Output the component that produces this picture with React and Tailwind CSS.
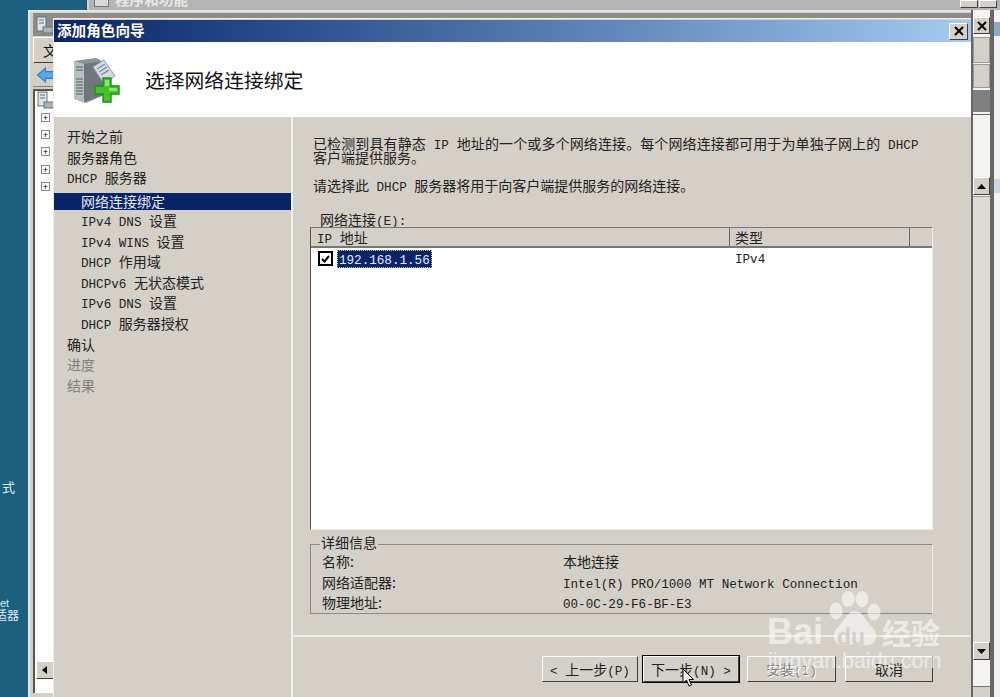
const cjk = '"Noto Sans CJK SC", sans-serif';

// SimSun-like mix: CJK runs stay at full size, latin runs go through a narrower mono
const Mix = ({ text }) => {
	const parts = text.split(/([\x20-\x7e]+)/).filter(Boolean);
	return (
		<span>
			{parts.map((p, i) =>
				/^[\x20-\x7e]+$/.test(p) ? (
					<span key={i} className="font-['Liberation_Mono',monospace] text-[12.6px] leading-[0px] whitespace-pre">
						{p}
					</span>
				) : (
					<span key={i}>{p}</span>
				)
			)}
		</span>
	);
};

const raised = 'border border-t-white border-l-white border-r-[#404040] border-b-[#404040] bg-[#d4d0c8]';

const NavItem = ({ text, sub, active, disabled }) => {
	if (active) {
		return (
			<div className="h-[17px] mt-[5px] flex items-center pl-[27px] bg-[#0a246a] text-[#e8e8f0]">
				<Mix text={text} />
			</div>
		);
	}
	return (
		<div
			className={`h-[20.6px] flex items-center ${sub ? 'pl-[27px]' : 'pl-[13px]'} ${
				disabled ? 'text-[#808080]' : 'text-[#222]'
			}`}
		>
			<Mix text={text} />
		</div>
	);
};

const navItems = [
	{ text: '开始之前' },
	{ text: '服务器角色' },
	{ text: 'DHCP 服务器' },
	{ text: '网络连接绑定', sub: true, active: true },
	{ text: 'IPv4 DNS 设置', sub: true },
	{ text: 'IPv4 WINS 设置', sub: true },
	{ text: 'DHCP 作用域', sub: true },
	{ text: 'DHCPv6 无状态模式', sub: true },
	{ text: 'IPv6 DNS 设置', sub: true },
	{ text: 'DHCP 服务器授权', sub: true },
	{ text: '确认' },
	{ text: '进度', disabled: true },
	{ text: '结果', disabled: true },
];

const ServerIcon = () => (
	<svg width="50" height="50" viewBox="0 0 50 50" className="shrink-0">
		<path d="M2 6 L24 3 L32 7 L32 40 L14 48 L2 44 Z" fill="#8d9396" />
		<path d="M2 6 L12 9 L12 47 L2 44 Z" fill="#b9bec0" />
		<path d="M12 9 L32 6 L32 40 L12 47 Z" fill="#71767a" />
		<path d="M4 12 H11 M4 15 H11 M4 24 H11 M4 27 H11 M4 30 H11 M4 33 H11 M4 36 H11 M4 39 H11" stroke="#5a5f62" strokeWidth="1.2" />
		<path d="M21 12 L32 5 L43 21 L32 29 Z" fill="#d3dce6" stroke="#8fa0b2" />
		<path d="M25 14 L33 9 M27 17 L35 12 M29 20 L37 15" stroke="#77889a" strokeWidth="1.2" />
		<path d="M31 23 H39 V31 H47 V39 H39 V47 H31 V39 H23 V31 H31 Z" fill="#43c42b" stroke="#1f8f14" strokeWidth="1.4" />
		<path d="M33 25 H37 V33 H45 V36 H37 V31 H33 Z" fill="#8ae66f" />
	</svg>
);

const SmallServer = () => (
	<svg width="18" height="18" viewBox="0 0 18 18">
		<rect x="1" y="1" width="9" height="14" fill="#dfe3e6" stroke="#6d7275" />
		<path d="M3 4 H8 M3 7 H8" stroke="#6d7275" />
		<rect x="7" y="11" width="10" height="6" fill="#aab2b8" stroke="#6d7275" />
	</svg>
);

const Cross = () => (
	<svg width="10" height="10" viewBox="0 0 10 10">
		<path d="M1 1 L9 9 M9 1 L1 9" stroke="#000" strokeWidth="2" />
	</svg>
);

const Btn = ({ children, w, primary, disabled }) => (
	<div
		className={`h-[26px] ${w} flex items-center justify-center pb-[1px] ${raised} ${
			primary ? 'outline outline-black' : ''
		} ${disabled ? 'text-[#808080] [text-shadow:1px_1px_0_#fff]' : 'text-[#222]'}`}
	>
		{children}
	</div>
);

const Watermark = () => (
	<div className="absolute left-[765px] top-[588px] w-[200px] h-[100px] pointer-events-none">
		<svg width="54" height="58" viewBox="0 0 54 58" className="absolute left-[63px] top-[3px]">
			<g fill="#ffffff" fillOpacity="0.55">
				<ellipse cx="8" cy="20" rx="6.5" ry="8.5" />
				<ellipse cx="20" cy="8" rx="6.5" ry="8" />
				<ellipse cx="34" cy="8" rx="6.5" ry="8" />
				<ellipse cx="46" cy="21" rx="6.5" ry="8.5" />
				<path d="M27 20 C19 20 17 30 9 37 C2 44 7 56 18 54 C24 53 30 53 36 54 C47 56 52 44 45 37 C37 30 35 20 27 20 Z" />
			</g>
		</svg>
		<div className="absolute left-[2px] top-[24px] font-['Liberation_Sans',sans-serif] font-bold text-[36px] leading-[40px] text-white/55">
			Bai
		</div>
		<div className="absolute left-[72px] top-[36px] font-['Liberation_Sans',sans-serif] font-bold text-[23px] leading-[26px] text-[#d4d0c8]">
			du
		</div>
		<div className="absolute left-[117px] top-[30px] font-bold text-[29px] leading-[28px] text-white/55">经验</div>
		<div className="absolute left-[3px] top-[60px] font-['Liberation_Sans',sans-serif] text-[21.5px] leading-[26px] text-white/55">
			jingyan.baidu.com
		</div>
	</div>
);

export default function App() {
	return (
		<div
			className="relative w-[1000px] h-[697px] overflow-hidden bg-[#1c5f7e] text-[14px] leading-[14px]"
			style={{ fontFamily: cjk }}
		>
			{/* desktop labels */}
			<div className="absolute left-[2px] top-[480px] text-[13px] text-[#dfeef5]">式</div>
			<div className="absolute left-0 top-[598px] text-[#dfeef5]">
				<div className="font-['Liberation_Sans',sans-serif] text-[11px] leading-[10px]">et</div>
				<div className="text-[12px] leading-[13px] ml-[-5px] whitespace-nowrap">适器</div>
			</div>

			{/* window behind, programs and features */}
			<div className="absolute left-[87px] right-0 top-0 h-[10px] bg-[#b4b4b4] border-l-2 border-[#d4d0c8] flex overflow-hidden">
				<div className="ml-[5px] w-[15px] h-[7px] bg-[#d8d8d8] border-x border-b border-[#777]" />
				<div className="pl-[6px] -mt-[8px] text-[#e6e6e6] text-[14.6px] font-bold">程序和功能</div>
				<div className="ml-auto flex gap-[1px] mr-[3px]">
					<div className={`w-[18px] h-[8px] ${raised}`} />
					<div className={`w-[18px] h-[8px] ${raised}`} />
				</div>
			</div>

			{/* server manager window */}
			<div className="absolute left-[28px] top-[10px] w-[967px] bottom-0 bg-[#d4d0c8] border-l-2 border-t-2 border-[#e8e6e0] flex flex-col">
				<div className="h-[23px] bg-[#8c8c8c] mt-[1px] ml-[3px] pl-[3px] flex items-center">
					<SmallServer />
				</div>
				<div className={`mt-[1px] ml-[3px] h-[26px] ${raised} flex items-center pl-[9px] text-[#111]`}>文</div>
				<div className="ml-[3px] h-[24px] flex items-center pl-[3px] border-b border-[#808080]">
					<svg width="19" height="16" viewBox="0 0 16 14">
						<path d="M1 7 L8 1 V4 H15 V10 H8 V13 Z" fill="#5aa9e6" stroke="#2f7fc0" />
					</svg>
				</div>
				<div className="flex-1 flex ml-[3px] mt-[2px] mb-[4px] min-h-0">
					<div className="w-[22px] bg-white border-l-2 border-t-2 border-[#555] flex flex-col">
						<div className="ml-[2px]">
							<SmallServer />
						</div>
						<div className="flex flex-col gap-[8.2px] mt-[4px] pl-[6px]">
							{[0, 1, 2, 3, 4].map((i) => (
								<div
									key={i}
									className="w-[9px] h-[9px] border border-[#888] flex items-center justify-center text-[9px] leading-none text-black"
								>
									+
								</div>
							))}
						</div>
						<div className="mt-auto mb-[14px]">
							<div className={`w-[18px] h-[18px] ml-[1px] ${raised} flex items-center justify-center`}>
								<svg width="6" height="8" viewBox="0 0 6 8">
									<path d="M5 0 V8 L0 4 Z" fill="#000" />
								</svg>
							</div>
						</div>
					</div>
				</div>
			</div>

			{/* right side: outer scrollbar and neighbouring pane */}
			<div className="absolute left-[971px] top-[10px] w-[21px] bottom-0 bg-[#f4f3f0] border-x-2 border-[#666] flex flex-col">
				<div className={`w-[17px] h-[17px] mt-[7px] ${raised} flex items-center justify-center`}>
					<Cross />
				</div>
				<div className="w-[17px] h-[26px] mt-[3px] bg-[#d4d0c8] border border-[#999]" />
				<div className="w-[17px] h-[24px] mt-[1px] bg-[#d4d0c8] border border-[#999]" />
				<div className="w-[17px] h-[22px] mt-[2px] bg-[#808080]" />
				<div className="h-[62px] mt-[2px] border-t border-[#666]" />
				<div className={`w-[17px] h-[18px] mt-[1px] ${raised} flex items-center justify-center`}>
					<svg width="9" height="5" viewBox="0 0 9 5">
						<path d="M0 5 H9 L4.5 0 Z" fill="#000" />
					</svg>
				</div>
				<div className="flex-1 mt-[1px] bg-[#dedbd5] border-t border-[#999]" />
				<div className={`w-[17px] h-[18px] ${raised} flex items-center justify-center`}>
					<svg width="9" height="5" viewBox="0 0 9 5">
						<path d="M0 0 H9 L4.5 5 Z" fill="#000" />
					</svg>
				</div>
				<div className="h-[26px]" />
				<div className="h-[11px] bg-[#d4d0c8] border-t border-[#777]" />
			</div>
			<div className="absolute left-[992px] top-[10px] w-[8px] bottom-0 bg-[#f2f2f2] border-l-2 border-[#666]">
				<div className="h-[14px] mt-[12px] bg-[#8ea8cc]" />
				<div className="h-[14px] mt-[143px] bg-[#cdd6e3]" />
			</div>

			{/* wizard dialog */}
			<div className="absolute left-[53px] top-[18px] w-[918px] h-[679px] bg-[#d4d0c8] border-l border-t border-[#f0eee8] flex flex-col text-[#222]">
				<div className="mt-[1px] h-[22px] shrink-0 bg-gradient-to-r from-[#0a246a] to-[#a6caf0] flex items-center pl-[3px] pr-[3px]">
					<div className="text-white font-bold text-[14.6px] -mt-[2px]">添加角色向导</div>
					<div className={`ml-auto w-[19px] h-[17px] ${raised} flex items-center justify-center`}>
						<Cross />
					</div>
				</div>
				<div className="h-[75px] shrink-0 bg-white flex items-center pl-[18px] gap-[23px]">
					<ServerIcon />
					<div className="text-[19.8px] leading-[24px] text-[#111]">选择网络连接绑定</div>
				</div>
				<div className="flex-1 flex min-h-0">
					<div className="w-[239px] shrink-0 pt-[9px] border-r-2 border-[#f0eee8]">
						{navItems.map((item) => (
							<NavItem key={item.text} {...item} />
						))}
					</div>
					<div className="flex-1 flex flex-col min-w-0">
						<div className="h-[520px] shrink-0 pl-[20px] pt-[19px] border-b-2 border-[#eeece6] flex flex-col">
							<p className="whitespace-nowrap tracking-[0.12px]">
								<Mix text="已检测到具有静态 IP 地址的一个或多个网络连接。每个网络连接都可用于为单独子网上的 DHCP" />
							</p>
							<p className="whitespace-nowrap">客户端提供服务。</p>
							<p className="mt-[14px] whitespace-nowrap">
								<Mix text="请选择此 DHCP 服务器将用于向客户端提供服务的网络连接。" />
							</p>
							<div className="mt-[20px] ml-[7px] h-[14px]">
								<Mix text="网络连接(E):" />
							</div>
							<div className="mt-[1px] -ml-[3px] w-[623px] h-[303px] bg-white border border-t-[#777] border-l-[#555] border-r-[#f0eee8] border-b-[#f0eee8] flex flex-col shrink-0">
								<div className="h-[20px] shrink-0 bg-[#d4d0c8] border-b-2 border-[#777] flex items-center">
									<div className="w-[419px] h-full pl-[6px] flex items-center border-r border-[#666]">
										<Mix text="IP 地址" />
									</div>
									<div className="w-[180px] h-full pl-[5px] flex items-center border-r border-[#666]">类型</div>
								</div>
								<div className="flex items-center h-[19px] mt-[1px] pl-[7px]">
									<div className="w-[15px] h-[15px] shrink-0 border-2 border-black flex items-center justify-center mr-[4px]">
										<svg width="9" height="8" viewBox="0 0 9 8">
											<path d="M1 4 L3.5 6.5 L8 1" stroke="#000" strokeWidth="2" fill="none" />
										</svg>
									</div>
									<div className="w-[95px] h-[18px] shrink-0 bg-[#0a246a] text-[#e8ecf6] border border-dotted border-[#c8c8a0] flex items-center pl-[1px] pb-[2px]">
										<Mix text="192.168.1.56" />
									</div>
									<div className="ml-[303px] pb-[3px]">
										<Mix text="IPv4" />
									</div>
								</div>
							</div>
							<div className="relative mt-[14px] -ml-[3px] w-[623px] h-[70px] border border-t-[#8a8a8a] border-l-[#8a8a8a] border-r-[#f0eee8] border-b-[#8a8a8a] shrink-0">
								<div className="absolute left-[9px] -top-[10px] bg-[#d4d0c8] px-[1px]">详细信息</div>
								<div className="grid grid-cols-[241px_1fr] auto-rows-[20.5px] pl-[11px] pt-[6px] items-center">
									<div>名称:</div>
									<div>本地连接</div>
									<div>网络适配器:</div>
									<div>
										<Mix text="Intel(R) PRO/1000 MT Network Connection" />
									</div>
									<div>物理地址:</div>
									<div>
										<Mix text="00-0C-29-F6-BF-E3" />
									</div>
								</div>
							</div>
						</div>
						<div className="flex-1 flex items-start gap-[5px] pl-[249px] pt-[19px]">
							<Btn w="w-[96px]">
								<Mix text="< 上一步(P)" />
							</Btn>
							<Btn w="w-[96px]" primary>
								<Mix text="下一步(N) >" />
							</Btn>
							<Btn w="w-[89px] ml-[3px]" disabled>
								<Mix text="安装(I)" />
							</Btn>
							<Btn w="w-[88px] ml-[4px]">取消</Btn>
						</div>
					</div>
				</div>
			</div>

			{/* mouse cursor */}
			<svg width="13" height="20" viewBox="0 0 13 20" className="absolute left-[682px] top-[668px]">
				<path d="M1 1 V15 L4.5 12 L7 18 L9.5 17 L7 11.5 H11.5 Z" fill="#fff" stroke="#000" />
			</svg>

			<Watermark />
		</div>
	);
}
